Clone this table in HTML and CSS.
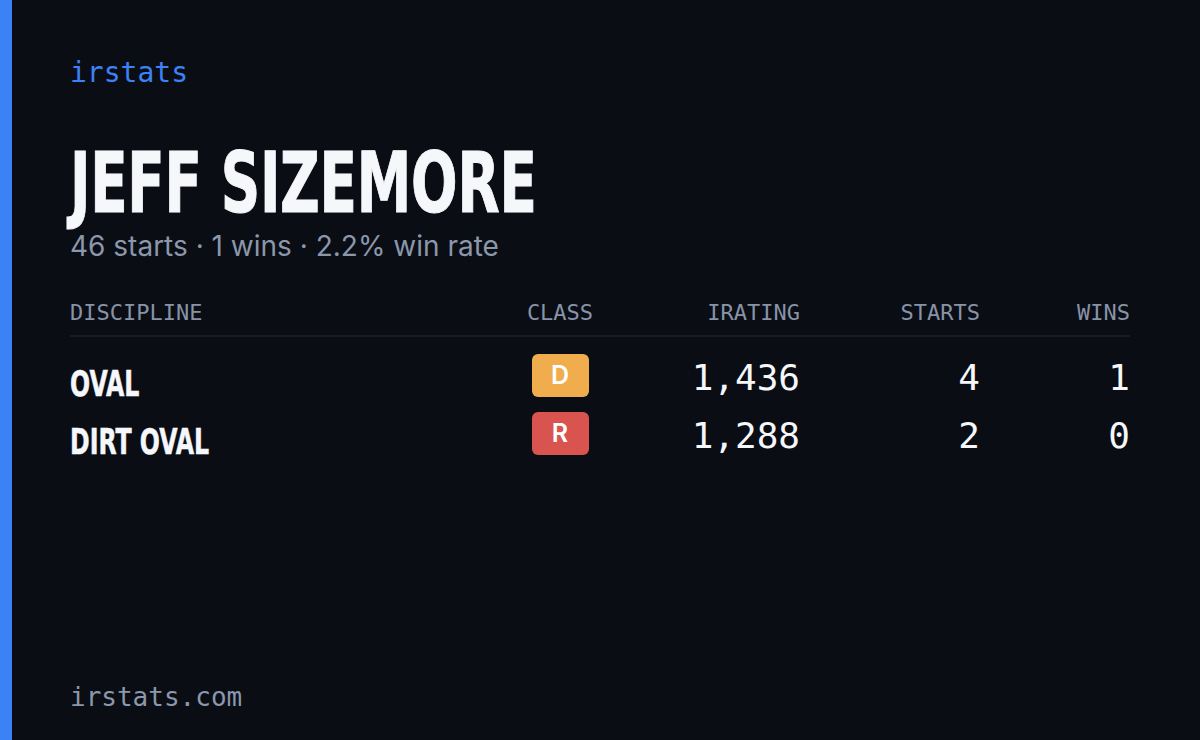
FILE: index.html
```html
<!DOCTYPE html>
<html>
<head>
<meta charset="utf-8">
<link rel="stylesheet" href="styles.css">
</head>
<body>
<div class="card">
  <div class="accent"></div>
  <div class="content">
    <div class="brand">irstats</div>
    <h1 class="name"><span class="cond">JEFF SIZEMORE</span></h1>
    <div class="summary">46 starts · 1 wins · 2.2% win rate</div>
    <div class="table">
      <div class="row head">
        <div class="c-disc">DISCIPLINE</div>
        <div class="c-class">CLASS</div>
        <div class="c-num">IRATING</div>
        <div class="c-num">STARTS</div>
        <div class="c-num">WINS</div>
      </div>
      <div class="row body">
        <div class="c-disc disc"><span class="cond">OVAL</span></div>
        <div class="c-class"><span class="badge badge-d">D</span></div>
        <div class="c-num num">1,436</div>
        <div class="c-num num">4</div>
        <div class="c-num num">1</div>
      </div>
      <div class="row body">
        <div class="c-disc disc"><span class="cond">DIRT OVAL</span></div>
        <div class="c-class"><span class="badge badge-r">R</span></div>
        <div class="c-num num">1,288</div>
        <div class="c-num num">2</div>
        <div class="c-num num">0</div>
      </div>
    </div>
    <div class="spacer"></div>
    <div class="footer">irstats.com</div>
  </div>
</div>
</body>
</html>
```

FILE: styles.css
```css
html, body {
  margin: 0;
  padding: 0;
  background: #0a0d14;
}
.card {
  width: 1200px;
  height: 740px;
  display: flex;
  background: #0a0d14;
  overflow: hidden;
}
.accent {
  width: 12px;
  flex: none;
  background: #3b82f6;
}
.content {
  flex: 1;
  display: flex;
  flex-direction: column;
  padding: 56px 70px 26px 58px;
}
.brand {
  font-family: "DejaVu Sans Mono", monospace;
  font-size: 28px;
  line-height: 34px;
  color: #3b82f6;
}
.cond {
  display: inline-block;
  transform: scaleX(0.725);
  transform-origin: left center;
  white-space: nowrap;
}
.name {
  margin: 58px 0 0 0;
  font-family: "DejaVu Sans Condensed", "DejaVu Sans", sans-serif;
  font-weight: 700;
  font-size: 84px;
  line-height: 70px;
  color: #f5f7fb;
  letter-spacing: -0.3px;
  -webkit-text-stroke: 1px #f5f7fb;
}
.summary {
  margin-top: 12px;
  font-family: Inter, "Noto Sans", sans-serif;
  font-size: 28px;
  line-height: 32px;
  color: #8b97ab;
  letter-spacing: 0px;
}
.table {
  margin-top: 37px;
  display: flex;
  flex-direction: column;
}
.row {
  display: grid;
  grid-template-columns: 1fr 120px 180px 180px 150px;
  align-items: center;
}
.head {
  font-family: "DejaVu Sans Mono", monospace;
  font-size: 22px;
  line-height: 28px;
  color: #8793a7;
  padding-bottom: 8px;
  border-bottom: 2px solid #161b26;
  margin-bottom: 9px;
}
.body {
  height: 58px;
}
.c-class { text-align: center; }
.c-num { text-align: right; }
.disc {
  font-family: "DejaVu Sans Condensed", "DejaVu Sans", sans-serif;
  font-weight: 700;
  font-size: 36px;
  color: #f5f7fb;
  padding-top: 16px;
  -webkit-text-stroke: 0.5px #f5f7fb;
}
.disc .cond { transform: scaleX(0.73); }
.num {
  font-family: "DejaVu Sans Mono", monospace;
  font-size: 36px;
  color: #f5f7fb;
  padding-top: 4px;
}
.badge {
  display: inline-flex;
  align-items: center;
  justify-content: center;
  width: 57px;
  height: 43px;
  border-radius: 6px;
  font-family: Inter, "Noto Sans", sans-serif;
  font-weight: 600;
  font-size: 25px;
  color: #ffffff;
}
.badge-d { background: #efad4e; }
.badge-r { background: #d9534f; }
.spacer { flex: 1; }
.footer {
  font-family: "DejaVu Sans Mono", monospace;
  font-size: 26px;
  line-height: 34px;
  color: #8b97ab;
}
```
